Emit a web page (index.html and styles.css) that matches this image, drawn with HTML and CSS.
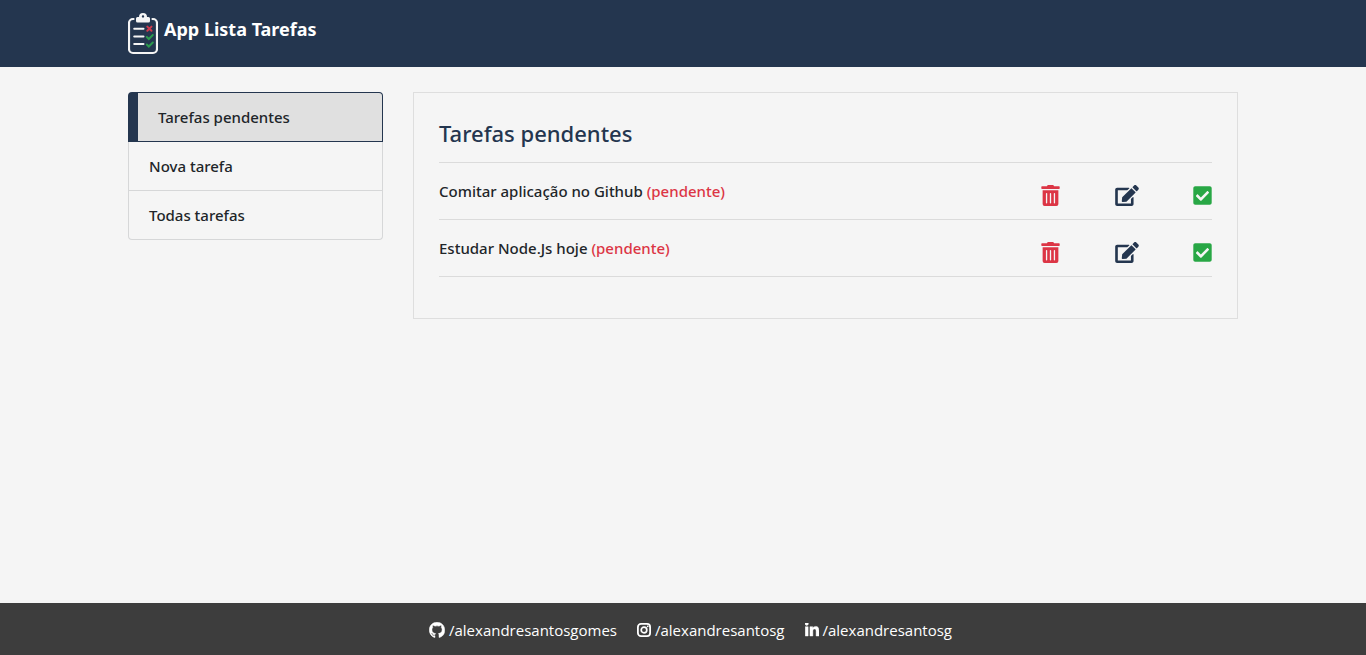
FILE: index.html
```html
<!DOCTYPE html>
<html lang="pt-br">
<head>
<meta charset="utf-8">
<meta name="viewport" content="width=device-width, initial-scale=1">
<title>App Lista Tarefas</title>
<link rel="stylesheet" href="styles.css">
</head>
<body>
<svg class="sprite" aria-hidden="true">
  <symbol id="trash" viewBox="0 0 448 512"><path d="M32 464a48 48 0 0 0 48 48h288a48 48 0 0 0 48-48V128H32zm272-256a16 16 0 0 1 32 0v224a16 16 0 0 1-32 0zm-96 0a16 16 0 0 1 32 0v224a16 16 0 0 1-32 0zm-96 0a16 16 0 0 1 32 0v224a16 16 0 0 1-32 0zM432 32H312l-9.4-18.7A24 24 0 0 0 281.1 0H166.8a23.72 23.72 0 0 0-21.4 13.3L136 32H16A16 16 0 0 0 0 48v32a16 16 0 0 0 16 16h416a16 16 0 0 0 16-16V48a16 16 0 0 0-16-16z"/></symbol>
  <symbol id="edit" viewBox="0 0 576 512"><path d="M402.6 83.2l90.2 90.2c3.8 3.8 3.8 10 0 13.8L274.4 405.6l-92.8 10.3c-12.4 1.4-22.9-9.1-21.5-21.5l10.3-92.8L388.8 83.2c3.8-3.8 10-3.8 13.8 0zm162-22.9l-48.8-48.8c-15.2-15.2-39.9-15.2-55.2 0l-35.4 35.4c-3.8 3.8-3.8 10 0 13.8l90.2 90.2c3.8 3.8 10 3.8 13.8 0l35.4-35.4c15.2-15.3 15.2-40 0-55.2zM384 346.2V448H64V128h229.8c3.2 0 6.2-1.3 8.5-3.5l40-40c7.6-7.6 2.2-20.5-8.5-20.5H48C21.5 64 0 85.5 0 112v352c0 26.5 21.5 48 48 48h352c26.5 0 48-21.5 48-48V306.2c0-10.7-12.9-16-20.5-8.5l-40 40c-2.2 2.3-3.5 5.3-3.5 8.5z"/></symbol>
  <symbol id="check" viewBox="0 0 448 512"><path d="M400 480H48c-26.51 0-48-21.49-48-48V80c0-26.51 21.49-48 48-48h352c26.51 0 48 21.49 48 48v352c0 26.51-21.49 48-48 48zm-204.686-98.059l184-184c6.248-6.248 6.248-16.379 0-22.627l-22.627-22.627c-6.248-6.248-16.379-6.249-22.628 0L184 302.745l-70.059-70.059c-6.248-6.248-16.379-6.248-22.628 0l-22.627 22.627c-6.248 6.248-6.248 16.379 0 22.627l104 104c6.249 6.25 16.379 6.25 22.628.001z"/></symbol>
</svg>

<header class="topbar">
  <div class="container">
    <a class="brand" href="#">
      <svg class="brand-logo" viewBox="0 0 30 42" fill="none" stroke-linecap="round" aria-hidden="true">
        <path d="M5.500 6H5a4 4 0 0 0-4 4v26a4 4 0 0 0 4 4h20a4 4 0 0 0 4-4V10a4 4 0 0 0-4-4h-.500" stroke="#f5f5f5" stroke-width="2.200"/>
        <path fill-rule="evenodd" d="M9.500 4H11a4 4 0 0 1 8 0h1.500A1.500 1.500 0 0 1 22 5.500V8a1.500 1.500 0 0 1-1.500 1.500h-11A1.500 1.500 0 0 1 8 8V5.500A1.500 1.500 0 0 1 9.500 4zM15 2.200a1.200 1.200 0 1 0 0 2.400 1.200 1.200 0 0 0 0-2.400z" fill="#f5f5f5"/>
        <path d="M6.200 15.700h9.300M6.200 23.400h9.300M6.200 31h9.300" stroke="#f5f5f5" stroke-width="2"/>
        <path d="M19.300 13.600l4.200 4.200M23.500 13.600l-4.200 4.200" stroke="#d0394c" stroke-width="2"/>
        <path d="M18.800 24l2 2 4-4M18.800 31.500l2 2 4-4" stroke="#2b9a4d" stroke-width="2"/>
      </svg>
      <span>App Lista Tarefas</span>
    </a>
  </div>
</header>

<div class="container content">
  <nav class="menu" aria-label="Menu">
    <a class="menu-item active" href="#" aria-current="page">Tarefas pendentes</a>
    <a class="menu-item" href="#">Nova tarefa</a>
    <a class="menu-item" href="#">Todas tarefas</a>
  </nav>

  <main class="panel">
    <h1 class="panel-title">Tarefas pendentes</h1>
    <ul class="tasks">
      <li class="task">
        <span class="task-text">Comitar aplicação no Github <span class="status">(pendente)</span></span>
        <span class="actions">
          <button class="action remove" aria-label="Remover"><svg class="icon"><use href="#trash"/></svg></button>
          <button class="action edit" aria-label="Editar"><svg class="icon icon-wide"><use href="#edit"/></svg></button>
          <button class="action done" aria-label="Concluir"><svg class="icon"><use href="#check"/></svg></button>
        </span>
      </li>
      <li class="task">
        <span class="task-text">Estudar Node.Js hoje <span class="status">(pendente)</span></span>
        <span class="actions">
          <button class="action remove" aria-label="Remover"><svg class="icon"><use href="#trash"/></svg></button>
          <button class="action edit" aria-label="Editar"><svg class="icon icon-wide"><use href="#edit"/></svg></button>
          <button class="action done" aria-label="Concluir"><svg class="icon"><use href="#check"/></svg></button>
        </span>
      </li>
    </ul>
  </main>
</div>

<footer class="footer">
  <a class="social" href="#">
    <svg class="social-icon" viewBox="0 0 16 16" aria-hidden="true"><path stroke="currentColor" stroke-width="0.500" d="M8 0.300C3.580 0.300 0.300 3.580 0.300 8c0 3.540 2.290 6.530 5.170 7.590.4.070.55-.17.55-.38 0-.19-.01-.82-.01-1.490-2.010.37-2.530-.49-2.690-.94-.09-.23-.48-.94-.82-1.130-.28-.15-.68-.52-.01-.53.63-.01 1.080.58 1.230.82.72 1.210 1.870.87 2.330.66.07-.52.28-.87.51-1.070-1.780-.2-3.640-.89-3.640-3.950 0-.87.31-1.590.82-2.150-.08-.2-.36-1.020.08-2.120 0 0 .67-.21 2.200.82.64-.18 1.320-.27 2-.27s1.360.09 2 .27c1.530-1.040 2.200-.82 2.200-.82.44 1.100.16 1.920.08 2.120.51.56.82 1.270.82 2.150 0 3.070-1.870 3.750-3.650 3.950.29.25.54.73.54 1.480 0 1.070-.01 1.930-.01 2.200 0 .21.15.46.55.38A8.010 8.010 0 0 0 15.700 8c0-4.420-3.280-7.700-7.700-7.700z"/></svg>
    <span>/alexandresantosgomes</span>
  </a>
  <a class="social" href="#">
    <svg class="social-icon narrow" viewBox="0 0 14 14" aria-hidden="true"><rect x="0.900" y="0.900" width="12.200" height="12.200" rx="3.100" fill="none" stroke="currentColor" stroke-width="1.800"/><circle cx="7" cy="7" r="2.800" fill="none" stroke="currentColor" stroke-width="1.700"/><circle cx="10.700" cy="3.300" r="0.900"/></svg>
    <span>/alexandresantosg</span>
  </a>
  <a class="social" href="#">
    <svg class="social-icon narrow" viewBox="0 0 448 448" aria-hidden="true"><path stroke="currentColor" stroke-width="14" d="M100.280 416H7.400V116.900h92.880zM53.790 76.100C24.090 76.100 0 51.500 0 21.800a53.790 53.790 0 0 1 107.580 0c0 29.700-24.100 54.300-53.790 54.300zM447.900 416h-92.680V270.400c0-34.700-.7-79.200-48.290-79.200-48.290 0-55.690 37.700-55.690 76.700V416h-92.780V116.900h89.080v40.800h1.300c12.400-23.500 42.690-48.300 87.880-48.300 94 0 111.280 61.900 111.280 142.300V416z"/></svg>
    <span>/alexandresantosg</span>
  </a>
</footer>
</body>
</html>
```

FILE: styles.css
```css
* {
  box-sizing: border-box;
}

body {
  margin: 0;
  min-height: 100vh;
  display: flex;
  flex-direction: column;
  background: #f5f5f5;
  color: #212529;
  font: 500 15px/24px "Segoe UI", "Noto Sans", "Open Sans", sans-serif;
}

a {
  color: inherit;
  text-decoration: none;
}

.sprite {
  display: none;
}

.container {
  width: 100%;
  max-width: 1140px;
  margin: 0 auto;
  padding: 0 15px;
}

.topbar {
  background: #24364f;
  color: #fff;
  padding: 13px 0 12px;
}

.brand {
  display: inline-flex;
  gap: 6px;
  font-size: 18px;
  font-weight: 700;
  line-height: 32px;
  vertical-align: top;
}

.brand-logo {
  width: 30px;
  height: 42px;
}

.content {
  display: grid;
  grid-template-columns: 255px 1fr;
  gap: 30px;
  align-items: start;
  padding-top: 25px;
  padding-bottom: 25px;
}

.menu {
  display: flex;
  flex-direction: column;
}

.menu-item {
  padding: 12px 20px;
  border: 1px solid #d6d7d8;
  border-top: 0;
}

.menu-item.active {
  background: #e0e0e0;
  border: 1px solid #24364f;
  border-left-width: 10px;
  border-radius: 4px 4px 0 0;
}

.menu-item:last-child {
  border-radius: 0 0 4px 4px;
}

.panel {
  border: 1px solid #dedede;
  padding: 25px 25px 41px;
}

.panel-title {
  margin: 0;
  padding: 1px 0 14px;
  border-bottom: 1px solid #dbdbdb;
  color: #24364f;
  font-size: 22px;
  font-weight: 500;
  line-height: 29px;
}

.tasks {
  list-style: none;
  margin: 0;
  padding: 0;
}

.task {
  display: flex;
  justify-content: space-between;
  padding: 16px 0 13px;
  border-bottom: 1px solid #dbdbdb;
}

.status,
.remove {
  color: #dc3545;
}

.actions {
  display: flex;
  justify-content: space-between;
  flex: 0 0 171px;
  padding-top: 6px;
}

.action {
  display: flex;
  padding: 0;
  border: 0;
  background: none;
  cursor: pointer;
}

.edit {
  color: #24364f;
}

.done {
  color: #28a745;
}

.icon {
  width: 19px;
  height: 21px;
  fill: currentColor;
}

.icon-wide {
  width: 24px;
}

.footer {
  margin-top: auto;
  display: flex;
  flex-wrap: wrap;
  justify-content: center;
  gap: 0 20px;
  padding: 15px 0 13px 15px;
  background: #3d3d3d;
  color: #fff;
  font-family: "Segoe UI", "Open Sans", sans-serif;
  font-weight: 400;
}

.social {
  display: flex;
  align-items: center;
  gap: 4px;
}

.social-icon {
  width: 16px;
  height: 16px;
  fill: currentColor;
}

.narrow {
  width: 14px;
  height: 14px;
}
```
